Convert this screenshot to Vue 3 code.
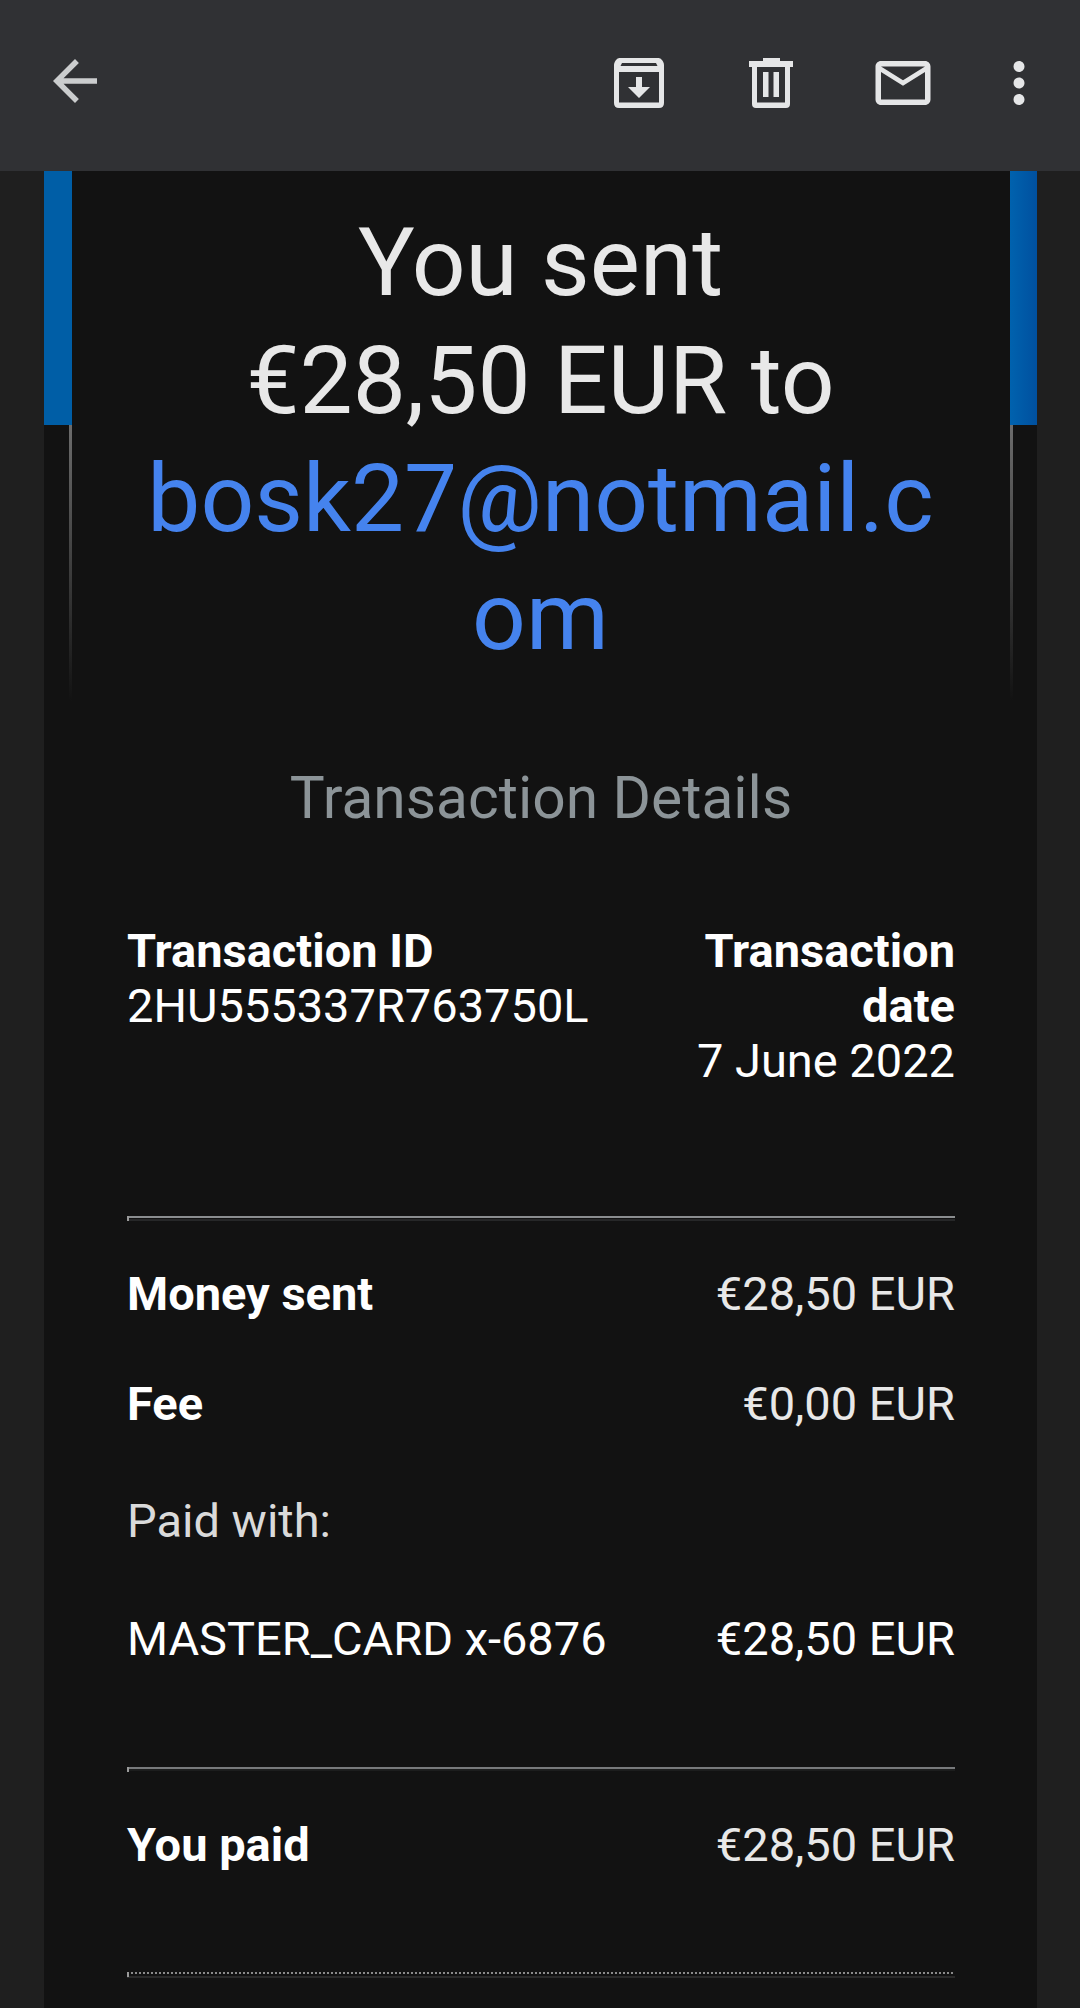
<script setup>
const rows = [
  { label: 'Money sent', value: '€28,50 EUR', cls: 'r-money' },
  { label: 'Fee', value: '€0,00 EUR', cls: 'r-fee' },
]
</script>

<template>
  <div class="page">
    <header class="bar">
      <svg class="ic back" viewBox="0 0 24 24"><path d="M20 11H7.830l5.590-5.590L12 4l-8 8 8 8 1.410-1.410L7.830 13H20v-2z" /></svg>
      <div class="actions">
        <svg class="ic" viewBox="0 0 66 66"><path fill-rule="evenodd" d="M13.500 8H52.500Q54.500 8 56 10L57 11.500Q58 13 58 15V53Q58 58 53 58H13Q8 58 8 53V15Q8 13 9 11.500L10 10Q11.500 8 13.500 8ZM16 13H50L51.500 16H14.500ZM13 22V52.500H53V22Z" /><path d="M30 27h6v10h8L33 48 22 37h8z" /></svg>
        <svg class="ic" viewBox="0 0 66 66"><path fill-rule="evenodd" d="M25 8H42V11H55V17H52V54Q52 58 48 58H18Q14 58 14 54V17H11V11H25ZM19 17V52.500H47V17Z" /><path d="M25 22h5.500v25H25zM35.500 22H41v25h-5.500z" /></svg>
        <svg class="ic" viewBox="0 0 24 24"><path d="M22 6c0-1.100-.9-2-2-2H4c-1.100 0-2 .9-2 2v12c0 1.100.9 2 2 2h16c1.100 0 2-.9 2-2V6zm-2 0l-8 5-8-5h16zm0 12H4V8l8 5 8-5v10z" /></svg>
        <svg class="ic more" viewBox="0 0 24 24"><path d="M12 8c1.100 0 2-.9 2-2s-.9-2-2-2-2 .9-2 2 .9 2 2 2zm0 2c-1.100 0-2 .9-2 2s.9 2 2 2 2-.9 2-2-.9-2-2-2zm0 6c-1.100 0-2 .9-2 2s.9 2 2 2 2-.9 2-2-.9-2-2-2z" /></svg>
      </div>
    </header>

    <main class="card">
      <section class="hero">
        <h1 class="title">You sent<br />€28,50 EUR to<br /><span class="link">bosk27@notmail.c<br />om</span></h1>
      </section>

      <section class="details">
        <h2 class="sub">Transaction Details</h2>
        <div class="meta">
          <div class="meta-left"><b>Transaction ID</b><br />2HU555337R763750L</div>
          <div class="meta-right"><b>Transaction<br />date</b><br />7 June 2022</div>
        </div>
        <div class="rule first"></div>
        <div v-for="r in rows" :key="r.label" class="row" :class="r.cls">
          <b>{{ r.label }}</b><span class="val">{{ r.value }}</span>
        </div>
        <div class="paid">Paid with:</div>
        <div class="row r-card"><span class="bright">MASTER_CARD x-6876</span><span class="bright">€28,50 EUR</span></div>
        <div class="rule second"></div>
        <div class="row r-total"><b>You paid</b><span class="val">€28,50 EUR</span></div>
        <div class="rule dotted"></div>
      </section>
    </main>
  </div>
</template>

<style>
html, body { margin: 0; background: #1f1f1f; }
</style>

<style scoped>
.page {
  width: 1080px;
  height: 2008px;
  overflow: hidden;
  background: #1f1f1f;
  font-family: Roboto, "Liberation Sans", sans-serif;
  color: #e8eaed;
  display: flex;
  flex-direction: column;
}
.bar {
  height: 171px;
  flex: none;
  background: #303134;
  display: flex;
  align-items: center;
  justify-content: space-between;
  padding: 0 28px 5px 42px;
  box-sizing: border-box;
}
.ic { width: 66px; height: 66px; fill: #e5e6e7; display: block; flex: none; }
.back { fill: #cbcdce; margin-top: -4px; }
.actions { display: flex; gap: 66px; }
.more { margin-left: -16px; }
.card {
  flex: 1;
  width: 993px;
  margin-left: 44px;
  background: #121212;
}
.hero {
  position: relative;
  height: 592px;
}
.hero::before, .hero::after {
  content: "";
  position: absolute;
  top: 0;
  width: 28px;
  height: 254px;
  background: #005ea6;
}
.hero::before { left: 0; }
.hero::after { right: 0; width: 27px; background: linear-gradient(90deg, #0062ae, #00509f); }
.title {
  margin: 0;
  padding-top: 33px;
  text-align: center;
  font-weight: 400;
  font-size: 94.500px;
  line-height: 118px;
  color: #e8e8e8;
  position: relative;
  height: 530px;
  box-sizing: border-box;
}
.title::before, .title::after {
  content: "";
  position: absolute;
  top: 254px;
  width: 3px;
  height: 276px;
  background: linear-gradient(#6c6c6c, #121212);
}
.title::before { left: 25px; }
.title::after { right: 24px; }
.link { color: #4583ee; }
.details { padding: 0 82px 0 83px; }
.sub {
  margin: 0;
  text-align: center;
  font-weight: 400;
  font-size: 58.700px;
  line-height: 70px;
  color: #8c9498;
}
.meta {
  display: flex;
  justify-content: space-between;
  margin-top: 90px;
  font-size: 47px;
  line-height: 55px;
  color: #fff;
  height: 292px;
  margin-bottom: 1px;
}
.meta-right { text-align: right; }
b { font-weight: 700; color: #fff; }
.rule { height: 2px; background: #8a8d8f; position: relative; }
.rule::before {
  content: "";
  position: absolute;
  left: 0;
  top: 0;
  width: 2px;
  height: 5px;
  background: #9a9a9a;
}
.first { box-shadow: 0 3px 0 #262728; }
.second { background: #77797b; margin-top: 101px; box-shadow: 0 2px 0 #1c1d1d; }
.dotted {
  margin-top: 100px;
  background: repeating-linear-gradient(90deg, #8a8a8a 0 2px, transparent 2px 4px);
  box-shadow: 0 4px 0 #2a2a2a;
}
.row {
  display: flex;
  justify-content: space-between;
  font-size: 47px;
  line-height: 55px;
}
.val { color: #e8e8e8; }
.bright { color: #fff; }
.r-money { margin-top: 48px; }
.r-fee { margin-top: 55px; }
.paid { margin-top: 62px; font-size: 47px; line-height: 55px; color: #dadada; }
.r-card { margin-top: 63px; }
.r-total { margin-top: 48px; }
</style>
